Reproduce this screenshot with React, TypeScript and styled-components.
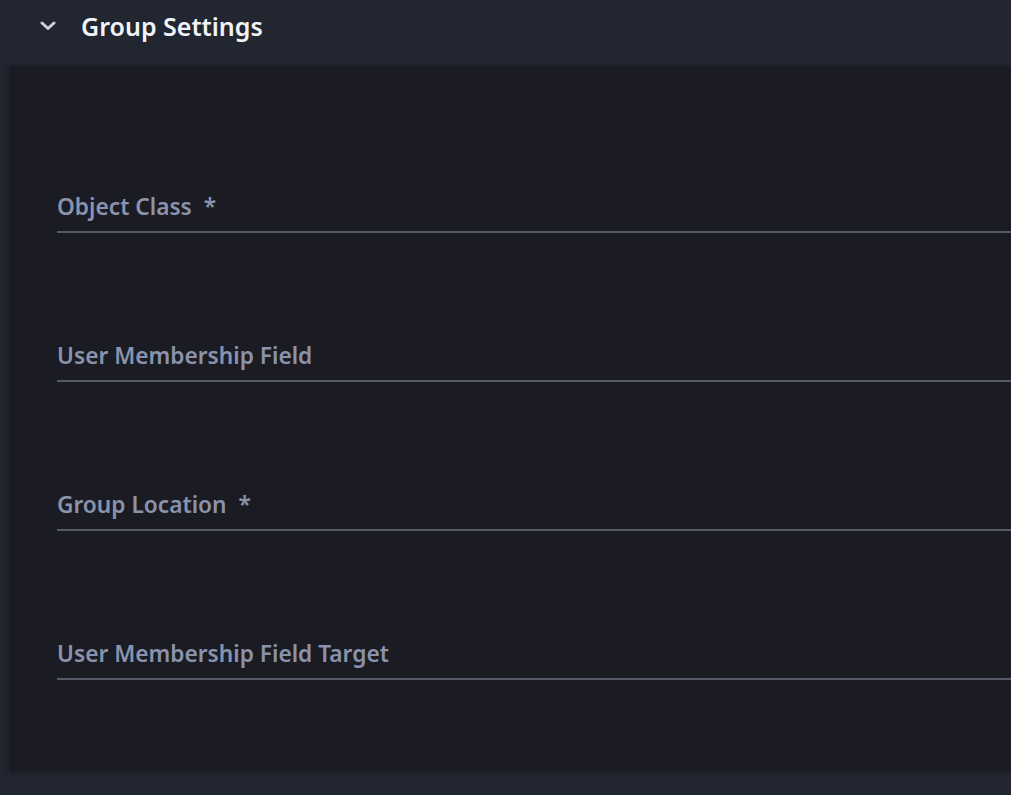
import styled, { createGlobalStyle } from "styled-components";

const GlobalStyle = createGlobalStyle`
    html, body {
        margin: 0;
        padding: 0;
        background: #222631;
        font-family: "Noto Sans", "Open Sans", sans-serif;
    }
`;

const fields = [
    { label: "Object Class", required: true },
    { label: "User Membership Field", required: false },
    { label: "Group Location", required: true },
    { label: "User Membership Field Target", required: false },
];

export default function App() {
    return (
        <Page>
            <GlobalStyle />
            <Header>
                <Chevron viewBox="0 0 16 10" aria-hidden="true">
                    <path d="M2 2 L8 7.5 L14 2" fill="none" stroke="#cfd2dc" strokeWidth="3" strokeLinecap="round" strokeLinejoin="round" />
                </Chevron>
                <Title>Group Settings</Title>
            </Header>
            <Panel>
                {fields.map((f) => (
                    <Field key={f.label}>
                        <Label>
                            {f.label}
                            {f.required && <Star>*</Star>}
                        </Label>
                    </Field>
                ))}
            </Panel>
        </Page>
    );
}

const Page = styled.div`
    width: 1011px;
    height: 795px;
    background: #222631;
    overflow: hidden;
`;

const Header = styled.div`
    height: 66px;
    display: flex;
    align-items: center;
    padding-left: 40px;
    box-sizing: border-box;
    padding-bottom: 14px;
`;

const Chevron = styled.svg`
    width: 16px;
    height: 10px;
    margin-right: 25px;
`;

const Title = styled.h2`
    margin: 0;
    font-size: 25px;
    font-weight: 600;
    color: #f2f3f6;
`;

const Panel = styled.div`
    margin-left: 10px;
    height: 706px;
    background: #1b1c23;
    box-shadow: -2px 0 6px rgba(0, 0, 0, 0.25);
    padding: 103px 0 0 47px;
    box-sizing: border-box;
`;

const Field = styled.div`
    height: 149px;
    box-sizing: border-box;
    padding-top: 22px;
`;

const Label = styled.div`
    height: 40px;
    border-bottom: 2px solid #555a69;
    font-size: 22.7px;
    font-weight: 600;
    color: #8a93ac;
    line-height: 31px;
`;

const Star = styled.span`
    margin-left: 12px;
`;
